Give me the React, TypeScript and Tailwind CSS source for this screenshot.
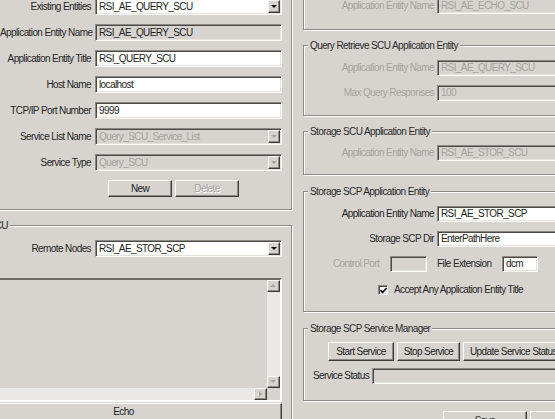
import React from "react";

const sunken =
  "border border-t-[#8c8985] border-l-[#8c8985] border-b-[#fbfbf9] border-r-[#fbfbf9] shadow-[inset_1px_1px_0_#4b4a48,inset_-1px_-1px_0_#e4e2dd]";
const raised =
  "border border-t-[#fbfbf9] border-l-[#fbfbf9] border-b-[#3e3d3b] border-r-[#3e3d3b] shadow-[inset_-1px_-1px_0_#8c8985]";

function Group({
  label,
  className = "",
  children,
}: {
  label?: string;
  className?: string;
  children?: React.ReactNode;
}) {
  return (
    <div
      className={`relative shrink-0 border border-[#8d8a85] shadow-[inset_1px_1px_0_#fff,1px_1px_0_#fff] ${className}`}
    >
      {label && (
        <span className="absolute top-[-6px] left-[4px] bg-[#d7d4cf] px-[2px] leading-[11px] whitespace-nowrap text-[#2a2a2a]">
          {label}
        </span>
      )}
      {children}
    </div>
  );
}

function TextBox({
  value = "",
  white,
  disabled,
  className = "",
}: {
  value?: string;
  white?: boolean;
  disabled?: boolean;
  className?: string;
}) {
  return (
    <div
      className={`flex items-center pl-[3px] overflow-hidden whitespace-nowrap ${sunken} ${
        white ? "bg-white" : "bg-[#d7d4cf]"
      } ${disabled ? "text-[#a6a39e]" : "text-[#222]"} ${className}`}
    >
      {value}
    </div>
  );
}

function Arrow({ dir, disabled }: { dir: "up" | "down" | "right"; disabled?: boolean }) {
  const c = disabled ? "#a6a39e" : "#111";
  const pts =
    dir === "down" ? "0,0 6,0 3,3" : dir === "up" ? "0,3 6,3 3,0" : "0,0 3,3 0,6";
  const w = dir === "right" ? 4 : 7;
  const h = dir === "right" ? 7 : 4;
  return (
    <svg width={w} height={h} viewBox={`0 0 ${w} ${h}`}>
      <polygon points={pts} fill={c} />
    </svg>
  );
}

function Combo({
  value,
  disabled,
  className = "",
}: {
  value: string;
  disabled?: boolean;
  className?: string;
}) {
  return (
    <div
      className={`flex items-stretch pl-[3px] overflow-hidden whitespace-nowrap ${sunken} ${
        disabled ? "bg-[#d7d4cf] text-[#a6a39e]" : "bg-white text-[#222]"
      } ${className}`}
    >
      <div className="flex-1 flex items-center">{value}</div>
      <div
        className={`w-[12px] m-[1px] flex items-center justify-center bg-[#d7d4cf] ${raised}`}
      >
        <Arrow dir="down" disabled={disabled} />
      </div>
    </div>
  );
}

function Button({
  children,
  disabled,
  className = "",
}: {
  children: React.ReactNode;
  disabled?: boolean;
  className?: string;
}) {
  return (
    <div
      className={`shrink-0 flex items-center justify-center whitespace-nowrap bg-[#d7d4cf] ${raised} ${
        disabled ? "text-[#a6a39e] [text-shadow:1px_1px_0_#fff]" : "text-[#222]"
      } ${className}`}
    >
      {children}
    </div>
  );
}

function LRow({
  label,
  children,
  disabled,
}: {
  label: string;
  children: React.ReactNode;
  disabled?: boolean;
}) {
  return (
    <div className="flex items-center h-[17px]">
      <div
        className={`w-[95px] shrink-0 text-right pr-[4px] whitespace-nowrap ${
          disabled ? "text-[#a6a39e]" : ""
        }`}
      >
        {label}
      </div>
      {children}
    </div>
  );
}

function RRow({
  label,
  children,
  disabled,
}: {
  label: string;
  children: React.ReactNode;
  disabled?: boolean;
}) {
  return (
    <div className="flex items-center h-[16px]">
      <div
        className={`w-[133px] shrink-0 text-right pr-[3px] whitespace-nowrap ${
          disabled ? "text-[#a6a39e]" : ""
        }`}
      >
        {label}
      </div>
      {children}
    </div>
  );
}

function ScrollBtn({ dir }: { dir: "up" | "down" | "right" }) {
  return (
    <div
      className={`w-[13px] h-[12px] shrink-0 flex items-center justify-center bg-[#d7d4cf] ${raised}`}
    >
      <Arrow dir={dir} disabled />
    </div>
  );
}

export default function App() {
  return (
    <div className="w-[555px] h-[419px] overflow-hidden bg-[#d7d4cf] flex font-['Liberation_Sans',Arial,sans-serif] text-[10px] tracking-[-0.6px] leading-none text-[#262626]">
      {/* Left column */}
      <div className="w-[293px] shrink-0 flex flex-col">
        <Group className="-ml-[10px] -mt-[20px] w-[302px] h-[230px] pl-[9px] pt-[17px]">
          <div className="flex flex-col gap-[9px]">
            <LRow label="Existing Entities">
              <Combo value="RSI_AE_QUERY_SCU" className="w-[187px] h-[17px]" />
            </LRow>
            <LRow label="Application Entity Name">
              <TextBox value="RSI_AE_QUERY_SCU" className="w-[187px] h-[17px]" />
            </LRow>
            <LRow label="Application Entity Title">
              <TextBox value="RSI_QUERY_SCU" white className="w-[187px] h-[17px]" />
            </LRow>
            <LRow label="Host Name">
              <TextBox value="localhost" white className="w-[187px] h-[17px]" />
            </LRow>
            <LRow label="TCP/IP Port Number">
              <TextBox value="9999" white className="w-[187px] h-[17px]" />
            </LRow>
            <LRow label="Service List Name">
              <Combo value="Query_SCU_Service_List" disabled className="w-[187px] h-[17px]" />
            </LRow>
            <LRow label="Service Type">
              <Combo value="Query_SCU" disabled className="w-[187px] h-[17px]" />
            </LRow>
            <div className="flex gap-[3px] pl-[108px]">
              <Button className="w-[64px] h-[17px]">New</Button>
              <Button disabled className="w-[64px] h-[17px]">
                Delete
              </Button>
            </div>
          </div>
        </Group>

        <Group className="mt-[15px] -ml-[60px] w-[352px] h-[230px] pl-[59px] pt-[14px]">
          <span className="absolute top-[-6px] left-[23px] bg-[#d7d4cf] px-[2px] leading-[11px] whitespace-nowrap">
            Echo SCU
          </span>
          <LRow label="Remote Nodes">
            <Combo value="RSI_AE_STOR_SCP" className="w-[187px] h-[17px]" />
          </LRow>
          <div
            className={`mt-[21px] -ml-[5px] w-[287px] h-[124px] flex flex-col bg-[#d7d4cf] border-2 border-t-[#6f6c68] border-l-[#6f6c68] border-b-[#fbfbf9] border-r-[#fbfbf9]`}
          >
            <div className="flex flex-1">
              <div className="flex-1" />
              <div className="w-[13px] flex flex-col bg-[#ebe9e5]">
                <ScrollBtn dir="up" />
                <div className="flex-1" />
                <ScrollBtn dir="down" />
              </div>
            </div>
            <div className="flex h-[12px]">
              <div className="flex-1 bg-[#ebe9e5]" />
              <ScrollBtn dir="right" />
              <div className="w-[13px] shrink-0" />
            </div>
          </div>
          <Button className="mt-[1px] -ml-[35px] w-[317px] h-[18px]">Echo</Button>
        </Group>
      </div>

      {/* Right column */}
      <div className="ml-[10px] w-[270px] shrink-0 flex flex-col">
        <Group className="-mt-[40px] h-[70px] pt-[37px]">
          <RRow label="Application Entity Name" disabled>
            <TextBox value="RSI_AE_ECHO_SCU" disabled className="w-[140px] h-[16px]" />
          </RRow>
        </Group>

        <Group
          label="Query Retrieve SCU Application Entity"
          className="mt-[15px] h-[71px] pt-[14px]"
        >
          <div className="flex flex-col gap-[9px]">
            <RRow label="Application Entity Name" disabled>
              <TextBox value="RSI_AE_QUERY_SCU" disabled className="w-[140px] h-[16px]" />
            </RRow>
            <RRow label="Max Query Responses" disabled>
              <TextBox value="100" disabled className="w-[140px] h-[16px]" />
            </RRow>
          </div>
        </Group>

        <Group label="Storage SCU Application Entity" className="mt-[15px] h-[44px] pt-[13px]">
          <RRow label="Application Entity Name" disabled>
            <TextBox value="RSI_AE_STOR_SCU" disabled className="w-[140px] h-[16px]" />
          </RRow>
        </Group>

        <Group label="Storage SCP Application Entity" className="mt-[16px] h-[121px] pt-[14px]">
          <div className="flex flex-col gap-[9px]">
            <RRow label="Application Entity Name">
              <TextBox value="RSI_AE_STOR_SCP" white className="w-[140px] h-[16px]" />
            </RRow>
            <RRow label="Storage SCP Dir">
              <TextBox value="EnterPathHere" white className="w-[140px] h-[16px]" />
            </RRow>
            <div className="flex items-center h-[16px]">
              <div className="ml-[29px] w-[57px] shrink-0 whitespace-nowrap text-[#a6a39e]">
                Control Port
              </div>
              <TextBox disabled className="w-[37px] h-[16px]" />
              <div className="ml-[10px] w-[65px] shrink-0 whitespace-nowrap">File Extension</div>
              <TextBox value="dcm" white className="w-[36px] h-[16px]" />
            </div>
          </div>
          <div className="mt-[12px] flex items-center h-[12px]">
            <div
              className={`ml-[74px] w-[10px] h-[10px] bg-white flex items-center justify-center ${sunken}`}
            >
              <svg width="7" height="7" viewBox="0 0 7 7">
                <polyline points="0.5,3 2.5,5.5 6.5,1" fill="none" stroke="#111" strokeWidth="1.6" />
              </svg>
            </div>
            <span className="ml-[6px] whitespace-nowrap">Accept Any Application Entity Title</span>
          </div>
        </Group>

        <Group label="Storage SCP Service Manager" className="mt-[16px] h-[73px] pt-[13px]">
          <div className="flex">
            <Button className="ml-[24px] w-[66px] h-[19px]">Start Service</Button>
            <Button className="ml-[3px] w-[63px] h-[19px]">Stop Service</Button>
            <Button className="ml-[3px] w-[110px] h-[19px] !justify-start pl-[6px]">
              Update Service Status
            </Button>
          </div>
          <div className="mt-[7px] flex items-center h-[16px]">
            <div className="ml-[9px] w-[59px] shrink-0 whitespace-nowrap">Service Status</div>
            <TextBox className="w-[200px] h-[16px]" />
          </div>
        </Group>

        <div className="mt-[10px] flex shrink-0">
          <Button className="ml-[140px] w-[84px] h-[20px]">Save</Button>
          <Button className="ml-[3px] w-[84px] h-[20px]">Close</Button>
        </div>
      </div>
    </div>
  );
}
